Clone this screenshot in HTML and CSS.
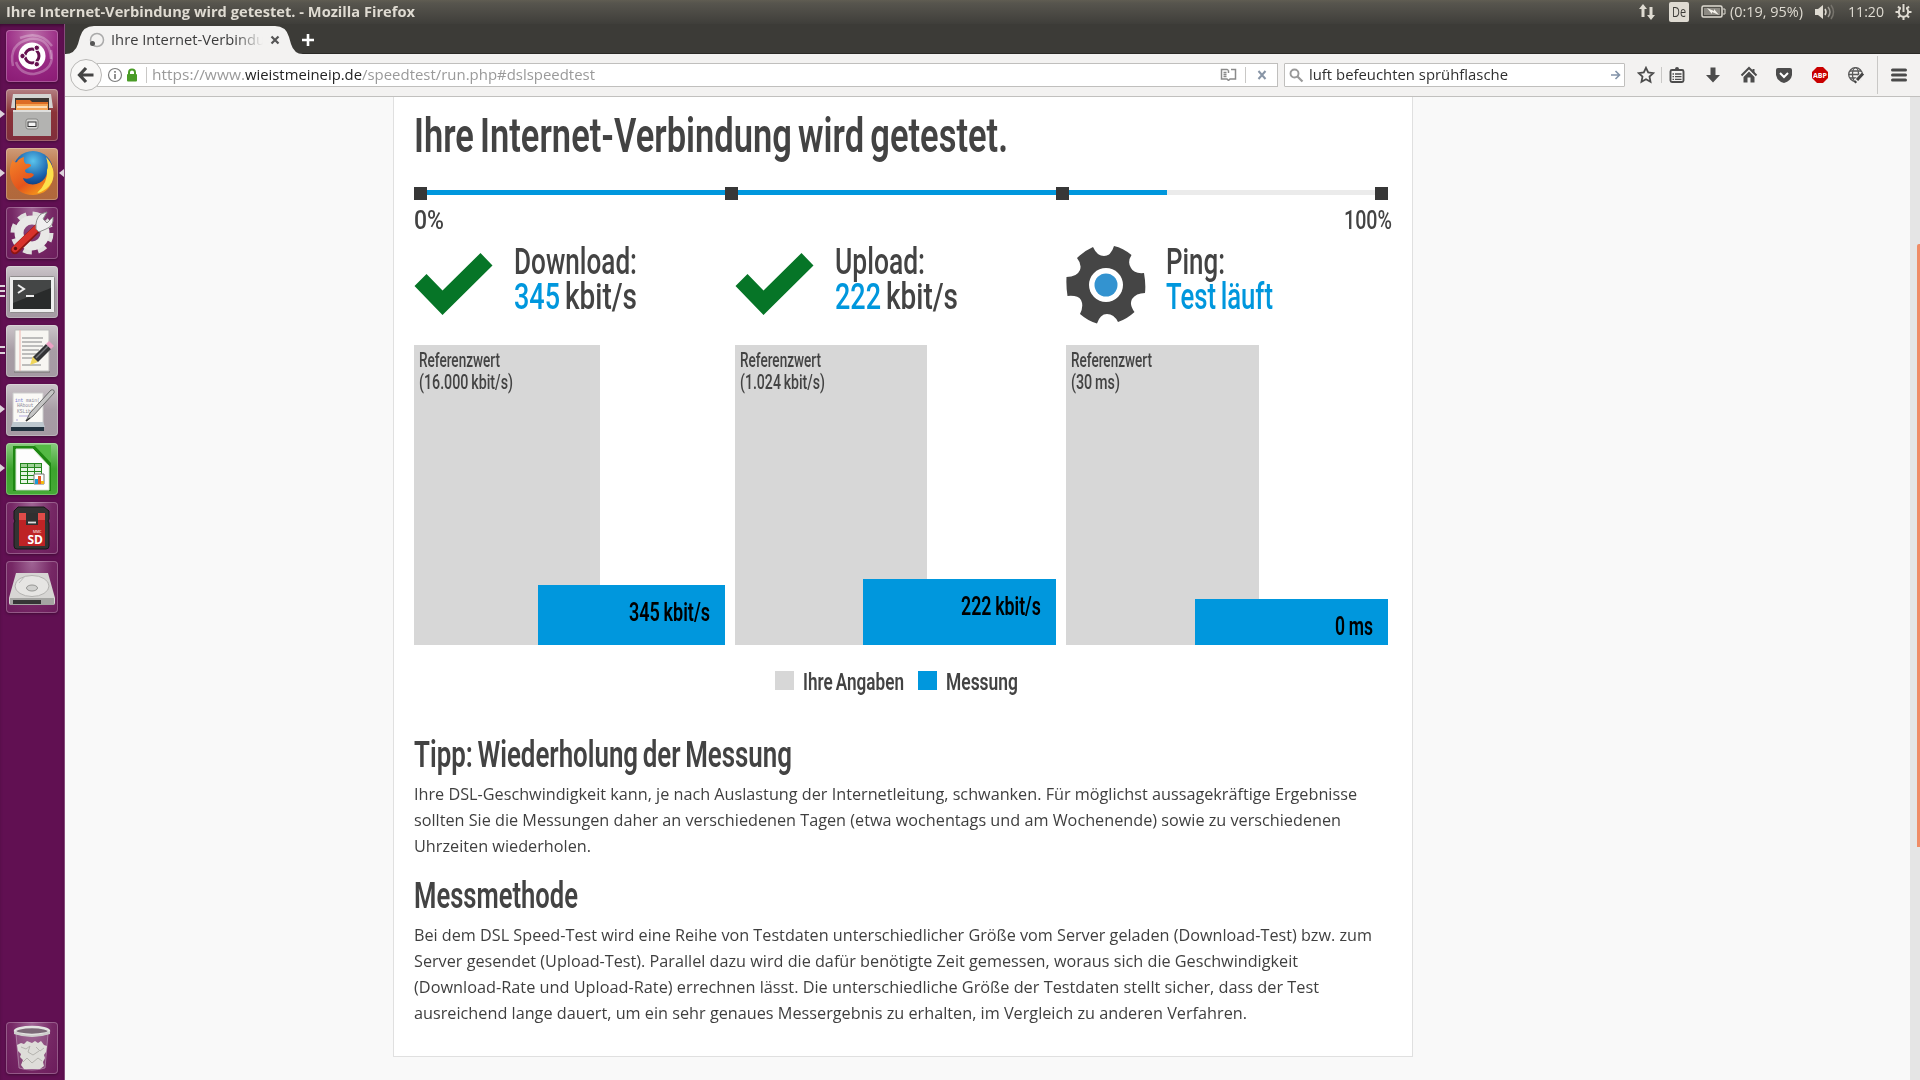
FILE: index.html
```html
<!DOCTYPE html>
<html lang="de">
<head>
<meta charset="utf-8">
<title>Ihre Internet-Verbindung wird getestet.</title>
<link rel="stylesheet" href="styles.css">
</head>
<body>
<header class="panel">
  <span class="panel-title" data-w="409">Ihre Internet-Verbindung wird getestet. - Mozilla Firefox</span>
  <div class="indicators">
    <svg class="ind-net" width="18" height="18" viewBox="0 0 18 18"><path d="M5 1 9 6H6.500V14H3.500V6H1ZM13 17 9 12H11.500V4H14.500V12H17Z" fill="#dfdbd2"/></svg>
    <span class="ind-lang"><span data-w="14">De</span></span>
    <svg class="ind-bat" width="25" height="14" viewBox="0 0 25 14"><rect x="1" y="1" width="20" height="11" rx="1.500" fill="none" stroke="#dfdbd2" stroke-width="1.500"/><rect x="3" y="3" width="16" height="7" fill="#8d8a83"/><path d="M22 4h2v5h-2" fill="none" stroke="#dfdbd2"/><path d="M6 3l7 3 0-2 5 6-7-3v2z" fill="#f4f1ea"/></svg>
    <span class="ind-pct" data-w="73">(0:19, 95%)</span>
    <svg class="ind-vol" width="20" height="16" viewBox="0 0 20 16"><path d="M0 5h3l5-4v14l-5-4H0z" fill="#dfdbd2"/><path d="M10 5q2 3 0 6" fill="none" stroke="#dfdbd2" stroke-width="1.500"/><path d="M13 3q4 5 0 10" fill="none" stroke="#a19e97" stroke-width="1.500"/><path d="M16 1q5 7 0 14" fill="none" stroke="#77746d" stroke-width="1.500"/></svg>
    <span class="ind-clock" data-w="36">11:20</span>
    <svg class="ind-gear" width="17" height="18" viewBox="0 0 17 18"><circle cx="8.500" cy="9" r="4.700" fill="none" stroke="#dfdbd2" stroke-width="2"/><path d="M8.500 13v4M.5 9h4M12.500 9h4M3 3.500l2.500 2.500M14 3.500l-2.500 2.500M3 14.500l2.500-2.500M14 14.500l-2.500-2.500" stroke="#dfdbd2" stroke-width="2"/><path d="M8.500 0v9" stroke="#4a4843" stroke-width="5"/><path d="M8.500 1v8" stroke="#dfdbd2" stroke-width="2"/></svg>
  </div>
</header>

<div class="desktop">
<nav class="launcher">
  <div class="tile t-dash">
    <svg width="52" height="52" viewBox="0 0 52 52"><g fill="none" stroke="#fff" stroke-opacity=".28" stroke-width="2.500"><path d="M7 36Q2 14 24 9q20-2 21 20"/><path d="M45 20Q50 40 28 44 14 44 10 32"/><path d="M14 8q20-8 32 8"/></g><circle cx="26" cy="26" r="13.500" fill="#fff"/><circle cx="26" cy="26" r="7" fill="none" stroke="#65104f" stroke-width="3"/><path d="M26 26 15 26M26 26 31.500 16.500M26 26 31.500 35.500" stroke="#fff" stroke-width="1.500"/><g fill="#65104f" stroke="#fff"><circle cx="16.500" cy="26" r="2.700"/><circle cx="30.800" cy="17.800" r="2.700"/><circle cx="30.800" cy="34.200" r="2.700"/></g></svg>
  </div>
  <div class="tile t-files"><i class="run one"></i>
    <svg width="52" height="52" viewBox="0 0 52 52"><path d="M7 5h38l2 14H5z" fill="#d4d3d1"/><path d="M9 9h34v13H9z" fill="#3b3532"/><path d="M10 11h14l2 2h16v9H10z" fill="#dd6d26"/><path d="M10 15h32v7H10z" fill="#f5a455"/><path d="M11 18h30" stroke="#fff0d8" stroke-width="1.500"/><path d="M7 21h38v26H7z" fill="#b3b3b1"/><path d="M7 21h38v2H7z" fill="#dededc"/><rect x="20" y="30" width="12" height="10" rx="2" fill="#d9d9d7" stroke="#858582"/><rect x="22" y="33" width="8" height="4.500" fill="#f4f4f4" stroke="#333"/></svg>
  </div>
  <div class="tile t-firefox"><i class="run one"></i><i class="focus"></i>
    <svg width="52" height="52" viewBox="0 0 52 52"><defs><radialGradient id="ffb" cx=".5" cy=".25" r=".7"><stop offset="0" stop-color="#5bc4ec"/><stop offset=".6" stop-color="#1a61ad"/><stop offset="1" stop-color="#0c2c68"/></radialGradient><linearGradient id="ffo" x1="0" y1="0" x2=".8" y2="1"><stop offset="0" stop-color="#f5872a"/><stop offset=".6" stop-color="#e4541c"/><stop offset="1" stop-color="#f9a51b"/></linearGradient></defs><circle cx="27" cy="23" r="20" fill="url(#ffb)"/><path d="M7 11Q2 21 5 31 11 47 27 47 44 46 47 30 49 19 41 10 44 22 39 30 33 38 23 36 18 34 17 30 22 32 26 29 30 26 25 25 19 26 19 22L25 18Q25 15 20 16 17 14 18 9 12 11 11 14 7 15 7 11Z" fill="url(#ffo)"/><path d="M40 9Q51 21 46 34 41 43 31 45 42 35 41 22 43 18 40 9Z" fill="#fde04b"/></svg>
  </div>
  <div class="tile t-purple">
    <svg width="52" height="52" viewBox="0 0 52 52"><circle cx="26" cy="26" r="18" fill="none" stroke="#e0dfde" stroke-width="7" stroke-dasharray="8.140 6"/><circle cx="26" cy="26" r="13" fill="none" stroke="#e9e8e7" stroke-width="9"/><path d="M33 20 9 43" stroke="#8c1513" stroke-width="8.500" stroke-linecap="round"/><path d="M33 19 9 42" stroke="#d8322b" stroke-width="6.500" stroke-linecap="round"/><path d="M30 22Q29 12 35 7L41 5 37 12 41 16 47 10Q48 19 40 22L33 25Z" fill="#efefef" stroke="#8e8e8e"/><circle cx="9.500" cy="41.500" r="1.700" fill="#5f0e0c"/></svg>
  </div>
  <div class="tile t-grey"><i class="run bars3"></i>
    <svg width="52" height="52" viewBox="0 0 52 52"><rect x="3.500" y="10.500" width="45" height="36" rx="1" fill="#eee" stroke="#8f8c8d"/><rect x="7" y="14" width="38" height="29" fill="#292b2b"/><path d="M7 14h38v8L7 37z" fill="#444646"/><path d="M12 19l6 4-6 4M20 30h8" fill="none" stroke="#eee" stroke-width="2"/></svg>
  </div>
  <div class="tile t-grey"><i class="run bars2"></i>
    <svg width="52" height="52" viewBox="0 0 52 52"><path d="M8 46h36v2H8z" fill="#8c8789"/><path d="M9 5h34v41H9z" fill="#f7f6f2" stroke="#bbb"/><path d="M14 5v41" stroke="#efb3ad"/><path d="M16 13h21M16 17h20M16 21h21M16 25h17M16 29h20M16 33h16M16 40h19" stroke="#aaa" stroke-width="1.300"/><path d="M24 40 27 31 32 37Z" fill="#f0d65a"/><path d="M27 32 40 19 45 24 32 37Z" fill="#333436"/><path d="M30 33 42 21" stroke="#77797c" stroke-width="1.500"/><path d="M40 19l3-3 5 5-3 3z" fill="#eba0c4"/></svg>
  </div>
  <div class="tile t-grey"><i class="run one"></i>
    <svg width="52" height="52" viewBox="0 0 52 52"><path d="M7 9h30v31H7z" fill="#faf9f6" stroke="#ccc"/><text class="code" x="9" y="17.500"><tspan fill="#7779cf">int</tspan> main(</text><text class="code" x="11" y="23.300">HAbout</text><text class="code" x="11" y="29">KSLib(</text><path d="M13 32h14M10 36h2" stroke="#b3a9dc"/><path d="M7 38h30l2 5H5z" fill="#bdc7ce"/><path d="M5 43h33v4H5z" fill="#223340"/><path d="M20 37 24 29 45 6Q49 5 48 9L27 32Z" fill="#c5c5c5" stroke="#666"/><path d="M20 37l4-3" stroke="#333" stroke-width="1.500"/></svg>
  </div>
  <div class="tile t-calc"><i class="run one"></i>
    <svg width="52" height="52" viewBox="0 0 52 52"><path d="M7 3h38v45H7z" fill="#1e8712"/><path d="M28 2h17v18z" fill="#54b944"/><path d="M10 6h17l16 17v24H10z" fill="#fdfdfd" stroke="#d4e8d0"/><path d="M14 20h22v21H14z" fill="#22851c"/><path d="M15 25h6v3h-6zM22 25h6v3h-6zM29 25h6v3h-6zM15 29h6v3h-6zM22 29h6v3h-6zM29 29h6v3h-6zM15 33h6v3h-6zM22 33h6v3h-6zM15 37h6v3h-6zM22 37h6v3h-6z" fill="#e7f5e5"/><path d="M15 21h6v3h-6zM22 21h6v3h-6zM29 21h6v3h-6z" fill="#9ed196"/><path d="M28 31h10v10H28z" fill="#fff" stroke="#777"/><path d="M29 36h3v5h-3z" fill="#1a9bd8"/><path d="M32 33h3v8h-3z" fill="#e55b26"/><path d="M35 38h3v3h-3z" fill="#f0b913"/></svg>
  </div>
  <div class="tile t-purple">
    <svg width="52" height="52" viewBox="0 0 52 52"><path d="M12 5h26l5 4v8l-1 2 1 2v23q0 3-3 3H11q-3 0-3-3V21l1-2-1-2V9z" fill="#333" stroke="#161616"/><path d="M13 11h26v33H13z" fill="#be2325"/><path d="M13 11h26v7H13z" fill="#df4b48"/><path d="M20 11h12v12H20z" fill="#303030"/><path d="M22 20.500h8" stroke="#ddd" stroke-width="1.800"/><text class="mmc" x="27" y="30.500">MMC</text><text class="sd" x="21.500" y="42">SD</text></svg>
  </div>
  <div class="tile t-purple">
    <svg width="52" height="52" viewBox="0 0 52 52"><path d="M10 12h32l7 25v5q0 2-2 2H5q-2 0-2-2v-5z" fill="#d7d6d4"/><path d="M4 37h44v7H4z" fill="#a5a5a3"/><path d="M7 39h28v4H7z" fill="#363636"/><ellipse cx="26" cy="25" rx="17" ry="10.500" fill="#e6e5e3" stroke="#b3b2b0"/><ellipse cx="26" cy="27" rx="5.500" ry="3" fill="#d0d0ce" stroke="#969694"/><path d="M19 15l-6 7" stroke="#bbb"/></svg>
  </div>
  <div class="tile t-purple t-trash">
    <svg width="52" height="52" viewBox="0 0 52 52"><path d="M10 12 13 46Q26 50 39 46L42 12Z" fill="#b48fad" fill-opacity=".3" stroke="#c4a6bf" stroke-opacity=".6"/><path d="M11 23l4-2 3 1 3-3 5 2 3-2 3 2 3-2 3 4 3 1-1 6-2 3 1 3-2 4 1 4-4 3H18l-3-4 2-5-3-3 1-3-3-3z" fill="#deddd9"/><path d="M15 25l5 2 4-3-2 6 5 3 6-4M17 40l4-4 5 5 6-5 4 3M30 25l4 4 4-3" fill="none" stroke="#b5b4af"/><ellipse cx="26" cy="9" rx="17" ry="4" fill="#7b6977" stroke="#e4e4e2" stroke-width="2.500"/><path d="M8 9q18 8 36 0v3q-18 6-36 0z" fill="#cfcfcd"/></svg>
  </div>
</nav>

<main class="browser">
  <div class="tabbar">
    <div class="tab">
      <svg class="tab-shape" width="238" height="28" viewBox="0 0 238 28"><path d="M0 28Q10 28 13 18L15 11Q18 0 29 0H210Q221 0 224 11L226 18Q229 28 238 28Z" fill="#f3f2f1"/></svg>
      <svg class="spinner" width="16" height="16" viewBox="0 0 16 16"><circle cx="8" cy="8" r="6.500" fill="none" stroke="#aaa" stroke-width="1.500"/><circle cx="3.500" cy="11.500" r="2.500" fill="#555"/></svg>
      <span class="tab-title"><span data-w="154">Ihre Internet-Verbindu</span></span>
      <svg class="tab-x" width="10" height="10" viewBox="0 0 10 10"><path d="M1.500 1.500l7 7M8.500 1.500l-7 7" stroke="#555" stroke-width="2.200"/></svg>
    </div>
    <svg class="plus" width="14" height="14" viewBox="0 0 14 14"><path d="M7 1v12M1 7h12" stroke="#fff" stroke-width="2.600"/></svg>
  </div>
  <div class="toolbar">
    <div class="back"><svg width="18" height="18" viewBox="0 0 18 18"><path d="M9 2 2.500 9 9 16M3 9h13.500" fill="none" stroke="#444" stroke-width="3.200"/></svg></div>
    <div class="urlbar">
      <svg class="info" width="16" height="16" viewBox="0 0 16 16"><circle cx="8" cy="8" r="6.500" fill="none" stroke="#7d7d7d" stroke-width="1.200"/><path d="M8 7v5M8 4v1.800" stroke="#7d7d7d" stroke-width="1.700"/></svg>
      <svg class="lock" width="12" height="14" viewBox="0 0 12 14"><path d="M3 7V4.500a3 3 0 0 1 6 0V7" fill="none" stroke="#4a9c27" stroke-width="2"/><rect x="1" y="6" width="10" height="7.500" rx="1" fill="#4a9c27"/></svg>
      <i class="sep"></i>
      <div class="url"><span data-w="93">https://www.</span><b data-w="117">wieistmeineip.de</b><span data-w="233">/speedtest/run.php#dslspeedtest</span></div>
      <svg class="reader" width="18" height="14" viewBox="0 0 18 14"><path d="M8.500 2.500 7 1.500H1.500v9.500H7l1.500 1.500M11 1.500h4.500v9.500H10l-1.500 1.500M8.500 2.500V5M3.500 4.500h3M3.500 6.500h3M3.500 8.500h3" fill="none" stroke="#8a8a8a" stroke-width="1.500"/></svg>
      <i class="sep"></i>
      <svg class="stop" width="10" height="10" viewBox="0 0 10 10"><path d="M1.500 1l7 8M8.500 1l-7 8" stroke="#8895a6" stroke-width="2"/></svg>
    </div>
    <div class="search">
      <svg width="15" height="15" viewBox="0 0 15 15"><circle cx="5.500" cy="5.500" r="4" fill="none" stroke="#999" stroke-width="1.900"/><path d="M8.500 8.500l5 5" stroke="#999" stroke-width="2.200"/></svg>
      <span data-w="199">luft befeuchten sprühflasche</span>
      <svg class="go" width="10" height="10" viewBox="0 0 10 10"><path d="M0 5h8M4.500 1 8.500 5 4.500 9" fill="none" stroke="#8293a8" stroke-width="1.600"/></svg>
    </div>
    <div class="tools">
      <svg width="18" height="18" viewBox="0 0 18 18"><path d="M9 1.800 11.200 6.500 16.200 7.100 12.500 10.600 13.500 15.700 9 13.200 4.500 15.700 5.500 10.600 1.800 7.100 6.800 6.500Z" fill="none" stroke="#4c4c4c" stroke-width="1.800"/></svg>
      <i class="sep"></i>
      <svg width="18" height="18" viewBox="0 0 18 18"><rect x="2.500" y="4" width="13" height="12" rx="1.500" fill="none" stroke="#4c4c4c" stroke-width="1.900"/><path d="M5 5V3h2q0-2 2-2t2 2h2v2z" fill="#4c4c4c"/><path d="M4.500 8h1.500M7 8h6.500M4.500 10.700h1.500M7 10.700h6.500M4.500 13.300h1.500M7 13.300h6.500" stroke="#4c4c4c" stroke-width="1.300"/></svg>
      <svg width="18" height="18" viewBox="0 0 18 18"><path d="M6.500 1.500h5V9H16l-7 7.500L2 9h4.500z" fill="#4c4c4c"/></svg>
      <svg width="18" height="18" viewBox="0 0 18 18"><path d="M1.500 9.500 9 2l7.500 7.500" fill="none" stroke="#4c4c4c" stroke-width="2"/><path d="M12.500 3h2v4h-2zM9 5.500l5.500 5.500v5.500h-4V11.500h-3v5h-4V11z" fill="#4c4c4c"/></svg>
      <svg width="18" height="18" viewBox="0 0 18 18"><path d="M1 4q0-2 2-2h12q2 0 2 2v5q-1 6-8 8Q2 15 1 9z" fill="#4c4c4c"/><path d="M5 7l4 4 4-4" fill="none" stroke="#fff" stroke-width="2"/></svg>
      <svg width="18" height="18" viewBox="0 0 18 18"><path d="M6 1h6l5 5v6l-5 5H6l-5-5V6z" fill="#c90000"/><text class="abp" x="2" y="12" textLength="14" lengthAdjust="spacingAndGlyphs">ABP</text></svg>
      <svg width="18" height="18" viewBox="0 0 18 18"><g fill="none" stroke="#5a5a5a" stroke-width="1.300"><circle cx="8.500" cy="8.500" r="6.800"/><ellipse cx="8.500" cy="8.500" rx="3" ry="6.800"/><path d="M1.500 8.500h14M3 5h11M3 12h11"/></g><path d="M16 8 8.500 16" stroke="#f3f2f1" stroke-width="5"/><path d="M16 7.500l-6 6.500M9 15l-1.500 1.500" stroke="#444" stroke-width="3"/></svg>
      <i class="sep tall"></i>
      <svg width="18" height="18" viewBox="0 0 18 18"><path d="M2.500 4h13M2.500 9h13M2.500 14h13" stroke="#4a4a4a" stroke-width="3" stroke-linecap="round"/></svg>
    </div>
  </div>

  <div class="viewport">
    <article class="page">
      <h1><span data-w="594">Ihre Internet-Verbindung wird getestet.</span></h1>
      <div class="progress">
        <div class="track"><div class="done" style="width:77.31%"></div></div>
        <div class="stops"><i></i><i></i><i></i><i></i></div>
      </div>
      <div class="scale"><span data-w="30">0%</span><span data-w="48">100%</span></div>

      <section class="results">
        <div class="result">
          <svg width="79" height="62" viewBox="0 0 78 62"><path d="M0 33 12 21 28 37.500 66 0 78 12.500 28 62Z" fill="#067527"/></svg>
          <div><div class="line"><span data-w="123">Download:</span></div><div class="line"><em data-w="46">345</em><span data-w="72">kbit/s</span></div></div>
        </div>
        <div class="result">
          <svg width="79" height="62" viewBox="0 0 78 62"><path d="M0 33 12 21 28 37.500 66 0 78 12.500 28 62Z" fill="#067527"/></svg>
          <div><div class="line"><span data-w="90">Upload:</span></div><div class="line"><em data-w="46">222</em><span data-w="72">kbit/s</span></div></div>
        </div>
        <div class="result ping">
          <svg width="80" height="78" viewBox="0 0 80 78"><path d="M27 1Q31 10 38 10 45 10 48 0 57 2 65.500 9 61 16 65 22 68 28 78 27 80 38 79 47 70 47 66 53 63 59 68.500 66 61 73 52 76 48 68 41 68 34 68 31 77.500 22 75 14 68 18 60 15 54 12 49 1.500 50 0 41 0.500 31 11 31 14 24 16 18 11 12 18 5 27 1Z" fill="#454545"/><circle cx="40" cy="39" r="17" fill="#fff"/><circle cx="40" cy="39" r="11.500" fill="#3393d0"/></svg>
          <div><div class="line"><span data-w="59">Ping:</span></div><div class="line"><em data-w="107">Test läuft</em></div></div>
        </div>
      </section>

      <section class="charts">
        <div class="chart">
          <div class="ref"><span data-w="81">Referenzwert</span><br><span data-w="94">(16.000 kbit/s)</span></div>
          <div class="val" style="height:60px"><span data-w="81">345 kbit/s</span></div>
        </div>
        <div class="chart">
          <div class="ref"><span data-w="81">Referenzwert</span><br><span data-w="85">(1.024 kbit/s)</span></div>
          <div class="val" style="height:66px"><span data-w="80">222 kbit/s</span></div>
        </div>
        <div class="chart">
          <div class="ref"><span data-w="81">Referenzwert</span><br><span data-w="49">(30 ms)</span></div>
          <div class="val" style="height:46px"><span data-w="38">0 ms</span></div>
        </div>
      </section>

      <div class="legend">
        <i class="swatch grey"></i><span data-w="101">Ihre Angaben</span>
        <i class="swatch blue"></i><span data-w="72">Messung</span>
      </div>

      <h2><span data-w="378">Tipp: Wiederholung der Messung</span></h2>
      <p><span data-w="943">Ihre DSL-Geschwindigkeit kann, je nach Auslastung der Internetleitung, schwanken. Für möglichst aussagekräftige Ergebnisse</span><br><span data-w="927">sollten Sie die Messungen daher an verschiedenen Tagen (etwa wochentags und am Wochenende) sowie zu verschiedenen</span><br><span data-w="177">Uhrzeiten wiederholen.</span></p>
      <h2><span data-w="164">Messmethode</span></h2>
      <p><span data-w="958">Bei dem DSL Speed-Test wird eine Reihe von Testdaten unterschiedlicher Größe vom Server geladen (Download-Test) bzw. zum</span><br><span data-w="884">Server gesendet (Upload-Test). Parallel dazu wird die dafür benötigte Zeit gemessen, woraus sich die Geschwindigkeit</span><br><span data-w="905">(Download-Rate und Upload-Rate) errechnen lässt. Die unterschiedliche Größe der Testdaten stellt sicher, dass der Test</span><br><span data-w="833">ausreichend lange dauert, um ein sehr genaues Messergebnis zu erhalten, im Vergleich zu anderen Verfahren.</span></p>
    </article>
    <div class="scrollbar"><div class="thumb"></div></div>
  </div>
</main>
</div>
<script src="fit.js"></script>
</body>
</html>
```
FILE: styles.css
```css
* { box-sizing: border-box; }
body {
  margin: 0;
  width: 1920px;
  height: 1080px;
  overflow: hidden;
  display: flex;
  flex-direction: column;
  font-family: "Open Sans", "Noto Sans", sans-serif;
  font-size: 14px;
  color: #3c3c3c;
}
svg { display: block; flex: none; }
i, em { font-style: normal; }
b { font-weight: 400; }
[data-w] {
  display: inline-block;
  white-space: nowrap;
  transform-origin: 0 50%;
}

/* top panel */
.panel {
  height: 24px;
  flex: none;
  display: flex;
  justify-content: space-between;
  align-items: center;
  padding: 0 8px 0 6px;
  background: linear-gradient(#605d52 0, #57554e 3px, #3f3e3a 100%);
  color: #dfdbd2;
}
.panel-title { font-weight: 700; line-height: 24px; }
.indicators { display: flex; align-items: center; line-height: 24px; }
.ind-lang {
  width: 20px;
  height: 20px;
  margin: 0 12px 0 13px;
  padding-left: 3px;
  border-radius: 2px;
  background: #dfdbd2;
  color: #3c3b37;
  line-height: 20px;
}
.ind-bat { margin-right: 4px; }
.ind-vol { margin: 0 13px 0 12px; }
.ind-gear { margin-left: 11px; }

.desktop { flex: 1; display: flex; min-height: 0; }

/* launcher */
.launcher {
  width: 65px;
  flex: none;
  display: flex;
  flex-direction: column;
  gap: 7px;
  padding: 6px 6px 6px;
  background: #611052;
  border-right: 1px solid #874b7c;
  box-shadow: inset 0 3px 4px -2px #2f0828;
}
.tile {
  position: relative;
  width: 52px;
  height: 52px;
  flex: none;
  border-radius: 4px;
  box-shadow: inset 0 0 0 1px rgba(255, 255, 255, .25), 0 1px 3px rgba(0, 0, 0, .35);
}
.t-dash { background: radial-gradient(circle at 50% 10%, #bd70aa, #9a2b85 50%, #8a1a74); }
.t-files { background: linear-gradient(#b37f82, #8b3338 45%, #802e3c); }
.t-firefox { background: linear-gradient(#cf9c78, #b66a3b 50%, #b0683c); }
.t-purple { background: radial-gradient(ellipse at 50% 0, #a06595, #762865 55%, #6b1b5b); }
.t-grey { background: linear-gradient(#ccc5ca, #a79da5 50%, #a59aa3); }
.t-calc { background: linear-gradient(#8bcc80, #3ca32d 50%, #45a936); }
.t-trash { margin-top: auto; }
.run { position: absolute; left: -6px; top: 21px; }
.one { border: solid transparent; border-width: 4px 0 4px 5px; border-left-color: #ddd3db; }
.bars2, .bars3 { width: 5px; height: 8px; border: solid #ddd3db; border-width: 2px 0; }
.bars3 { height: 12px; top: 19px; background: linear-gradient(transparent 3px, #ddd3db 3px, #ddd3db 5px, transparent 5px); }
.focus { position: absolute; right: -6px; top: 21px; border: solid transparent; border-width: 4px 5px 4px 0; border-right-color: #ddd3db; }
.code { font: 4.600px "Liberation Mono", monospace; fill: #8d8a99; }
.mmc { font: 3.500px "Open Sans", sans-serif; fill: #fff; }
.sd { font: 700 12px "Open Sans", sans-serif; fill: #fff; }

/* browser chrome */
.browser { flex: 1; display: flex; flex-direction: column; min-width: 0; }
.tabbar {
  height: 30px;
  flex: none;
  display: flex;
  background: #3c3b37;
  border-bottom: 1px solid #2a2926;
}
.tab {
  position: relative;
  width: 236px;
  height: 30px;
  display: flex;
  align-items: center;
  padding: 2px 0 0 24px;
}
.tab-shape { position: absolute; left: 0; top: 2px; }
.spinner, .tab-title, .tab-x { position: relative; }
.tab-title {
  width: 155px;
  margin: 0 4px 0 6px;
  line-height: 28px;
  overflow: hidden;
  -webkit-mask-image: linear-gradient(90deg, #000 124px, transparent 152px);
  mask-image: linear-gradient(90deg, #000 124px, transparent 152px);
}
.plus { margin: 9px 0 0; }
.toolbar {
  height: 43px;
  flex: none;
  display: flex;
  align-items: center;
  padding: 0 12px 0 5px;
  background: #f3f2f1;
  border-bottom: 1px solid #c1c0be;
}
.back {
  width: 32px;
  height: 32px;
  flex: none;
  z-index: 1;
  display: grid;
  place-items: center;
  border: 1px solid #b9b8b6;
  border-radius: 50%;
  background: #f8f7f6;
}
.urlbar, .search {
  height: 24px;
  display: flex;
  align-items: center;
  background: #fff;
  border: 1px solid #c0bfbd;
}
.urlbar { width: 1181px; margin-left: -5px; padding-left: 9px; }
.lock { margin-left: 3px; }
.sep { width: 1px; height: 16px; background: #c9c8c6; flex: none; }
.lock + .sep { margin: 0 5px 0 8px; }
.url { display: flex; color: #9a9a9a; line-height: 22px; }
.url b { color: #222; }
.reader { margin: 0 7px 0 auto; }
.stop { margin: 0 10px 0 11px; }
.search { width: 341px; margin-left: 6px; padding: 0 3px 0 4px; line-height: 22px; border-radius: 1px; }
.search span { margin-left: 5px; color: #2f2f2f; }
.go { margin-left: auto; }
.tools { flex: 1; display: flex; align-items: center; justify-content: space-between; padding-left: 12px; }
.tools .sep { margin: 0 -12px; }
.tools .tall { height: 38px; margin: 0 -6px; }
.abp { font: 700 7px "Open Sans", sans-serif; fill: #fff; }

/* page */
.viewport { flex: 1; display: flex; min-height: 0; background: #f9f9f9; }
.page {
  width: 1020px;
  height: 960px;
  margin-left: 328px;
  padding: 0 20px;
  background: #fff;
  border: 1px solid #e0e0e0;
  border-top: 0;
}
.scrollbar { width: 10px; margin-left: auto; padding-top: 147px; background: #e5e5e5; }
.thumb { width: 3px; height: 603px; margin-left: 7px; border-radius: 2px 0 0 0; background: #f08c66; }

h1, h2, .scale, .results, .charts, .legend {
  font-family: Roboto, "Open Sans", sans-serif;
  color: #434343;
  word-spacing: -.07em;
}
h1 { margin: 0; height: 79px; font-size: 49px; line-height: 78px; font-weight: 650; }
.progress { width: 974px; height: 13px; margin-top: 11px; padding-top: 3px; }
.track { height: 5px; background: #ebebeb; }
.done { height: 5px; background: #0097dd; }
.stops { display: grid; grid-template-columns: 311px 331px 319px 13px; margin-top: -8px; }
.stops i { width: 13px; height: 13px; background: #373737; }
.scale {
  width: 978px;
  height: 38px;
  display: flex;
  justify-content: space-between;
  font-size: 25px;
  line-height: 41px;
  font-weight: 500;
}
.results, .charts { display: grid; grid-template-columns: 311px 321px 322px; column-gap: 10px; }
.results { height: 101px; margin-top: 6px; font-size: 36.500px; line-height: 35px; font-weight: 500; }
.result { display: flex; gap: 21px; align-items: flex-start; }
.result > svg { margin-top: 9px; }
.ping { gap: 20px; }
.ping > svg { margin-top: 2px; }
.line { display: flex; gap: 5px; }
.result em { color: #0097dd; }
.charts { height: 300px; }
.chart { display: grid; grid-template-columns: 1fr; }
.ref, .val { grid-area: 1 / 1; }
.ref { width: 59.9%; padding: 5px; background: #d7d7d7; font-size: 19.500px; line-height: 22px; font-weight: 550; }
.val {
  width: 60%;
  align-self: end;
  justify-self: end;
  padding: 9px 15px 0 0;
  background: #0097dd;
  color: #000;
  text-align: right;
  font-size: 25px;
  line-height: 38px;
  font-weight: 600;
}
.legend { display: flex; margin: 26px 0 0 361px; height: 22px; font-size: 24.500px; line-height: 22px; font-weight: 600; }
.swatch { width: 19px; height: 19px; margin-right: 9px; }
.grey { background: #d7d7d7; }
.blue { margin-left: 14px; background: #0097dd; }
h2 { margin: 39px 0 5px; height: 44px; font-size: 36.500px; line-height: 46px; font-weight: 650; }
p { margin: 0; font-size: 16px; line-height: 26px; color: #3f3f3f; white-space: nowrap; }
p [data-w] { vertical-align: top; }
p + h2 { margin-top: 14px; }
```
FILE: fit.js
```js
// Condense each label to its design width and keep the flow in step with it.
document.querySelectorAll('[data-w]').forEach(function (el) {
  var target = parseFloat(el.dataset.w);
  var natural = el.getBoundingClientRect().width;
  var gap = parseFloat(getComputedStyle(el).marginRight) || 0;
  el.style.marginRight = (gap + target - natural) + 'px';
  el.style.transform = 'scaleX(' + target / natural + ')';
});
```
